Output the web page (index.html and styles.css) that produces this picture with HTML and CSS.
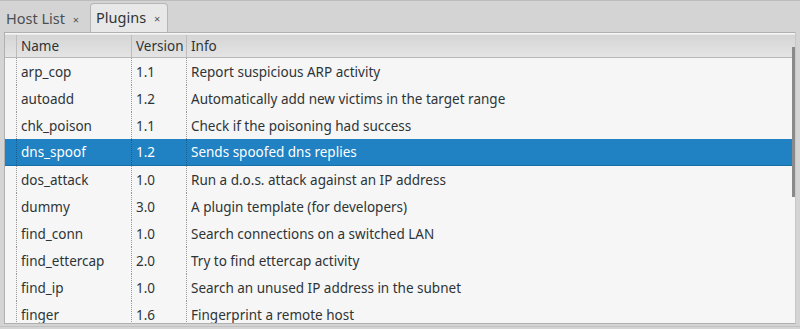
FILE: index.html
```html
<!DOCTYPE html>
<html>
  <head>
    <link rel="stylesheet" href="styles.css">
  </head>
  <body>
    <div class="tabbar">
      <div class="tab">Host List <span class="close">×</span></div>
      <div class="tab active">Plugins <span class="close">×</span></div>
    </div>
    <div class="frame">
      <div class="row head">
        <div class="cell lead"></div>
        <div class="cell name">Name</div>
        <div class="cell ver">Version</div>
        <div class="cell info">Info</div>
      </div>
      <div class="row">
        <div class="cell lead"></div><div class="cell name">arp_cop</div><div class="cell ver">1.1</div><div class="cell info">Report suspicious ARP activity</div>
      </div>
      <div class="row">
        <div class="cell lead"></div><div class="cell name">autoadd</div><div class="cell ver">1.2</div><div class="cell info">Automatically add new victims in the target range</div>
      </div>
      <div class="row">
        <div class="cell lead"></div><div class="cell name">chk_poison</div><div class="cell ver">1.1</div><div class="cell info">Check if the poisoning had success</div>
      </div>
      <div class="row selected">
        <div class="cell lead"></div><div class="cell name">dns_spoof</div><div class="cell ver">1.2</div><div class="cell info">Sends spoofed dns replies</div>
      </div>
      <div class="row">
        <div class="cell lead"></div><div class="cell name">dos_attack</div><div class="cell ver">1.0</div><div class="cell info">Run a d.o.s. attack against an IP address</div>
      </div>
      <div class="row">
        <div class="cell lead"></div><div class="cell name">dummy</div><div class="cell ver">3.0</div><div class="cell info">A plugin template (for developers)</div>
      </div>
      <div class="row">
        <div class="cell lead"></div><div class="cell name">find_conn</div><div class="cell ver">1.0</div><div class="cell info">Search connections on a switched LAN</div>
      </div>
      <div class="row">
        <div class="cell lead"></div><div class="cell name">find_ettercap</div><div class="cell ver">2.0</div><div class="cell info">Try to find ettercap activity</div>
      </div>
      <div class="row">
        <div class="cell lead"></div><div class="cell name">find_ip</div><div class="cell ver">1.0</div><div class="cell info">Search an unused IP address in the subnet</div>
      </div>
      <div class="row">
        <div class="cell lead"></div><div class="cell name">finger</div><div class="cell ver">1.6</div><div class="cell info">Fingerprint a remote host</div>
      </div>
      <div class="scrollthumb"></div>
    </div>
    <div class="bottom"></div>
  </body>
</html>
```

FILE: styles.css
```css
body {
    margin: 0;
    background-color: #d4d4d4;
    font-family: 'Noto Sans', sans-serif;
    font-size: 13.5px;
    color: #2e3436;
    overflow: hidden;
}

/* tabs on top */
.tabbar {
    height: 31px;
    border-top: 1px solid #bcbcbc;
    display: flex;
    align-items: flex-end;
}
.tab {
    height: 28px;
    line-height: 27px;
    padding: 0 9px 0 5px;
    font-size: 14.5px;
    color: #4a4f50;
    box-sizing: border-box;
    border: 1px solid transparent;
    border-bottom: none;
}
.tab.active {
    background-color: #e8e8e8;
    border-color: #b6b6b6;
    border-radius: 4px 4px 0 0;
    color: #2e3436;
    margin-left: 1px;
    height: 29px;
    padding: 0 7px 0 5px;
}
.close {
    font-size: 11px;
    margin-left: 4px;
    color: #555;
}

/* list */
.frame {
    position: relative;
    margin: 0 4px 0 4px;
    height: 290px;
    border: 1px solid #b0b0b0;
    border-right-color: #c8c8c8;
    background-color: #f6f6f6;
    overflow: hidden;
}
.row {
    display: flex;
    height: 27px;
    align-items: center;
}
.row.head {
    height: 22px;
    margin-top: 1px;
    background: linear-gradient(#d5d5d5, #e4e4e4);
    border-top: 1px solid #e9e9e9;
    border-bottom: 1px solid #b8b8b8;
}
.cell {
    height: 100%;
    display: flex;
    align-items: center;
    box-sizing: border-box;
    padding-left: 4px;
    white-space: nowrap;
}
.lead {
    width: 11px;
    padding: 0;
}
.name {
    width: 115px;
    border-left: 1px dotted #9a9a9a;
}
.ver {
    width: 55px;
    border-left: 1px dotted #9a9a9a;
}
.info {
    flex: 1;
    border-left: 1px dotted #9a9a9a;
}
.head .name, .head .ver, .head .info {
    border-left: 1px solid #bdbdbd;
}
.row.selected {
    background-color: #2081c3;
    border-bottom: 1px solid #1a6ea6;
    height: 26px;
    color: #ffffff;
}
.selected .cell {
    border-left-color: #1a5f8e;
}
.scrollthumb {
    position: absolute;
    right: -1px;
    top: 14px;
    width: 4px;
    height: 150px;
    background-color: #8a8a8a;
}
.bottom {
    height: 4px;
    margin-top: 2px;
    border-top: 1px solid #c2c2c2;
    border-bottom: 1px solid #bdbdbd;
}
```
